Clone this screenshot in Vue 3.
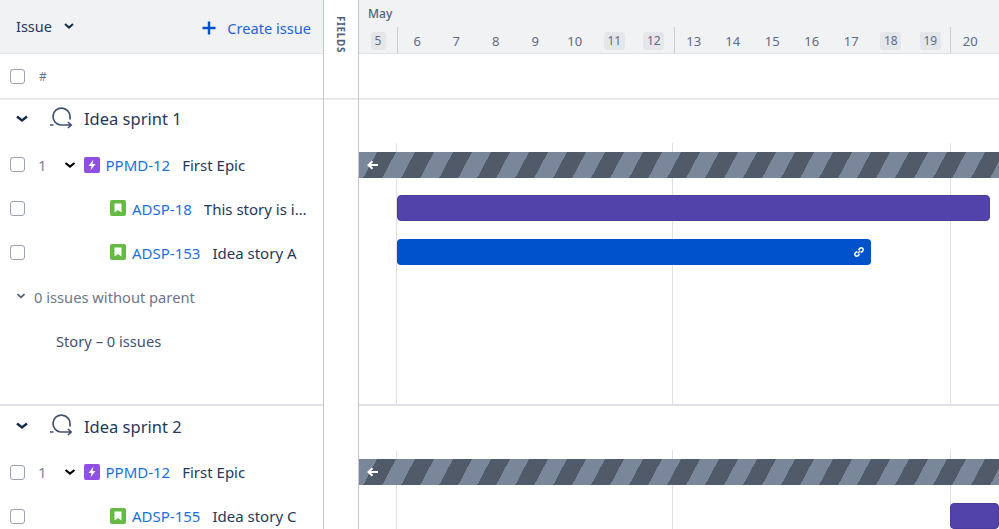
<script setup>
const days = [
  { n: 5, w: true, first: true },
  { n: 6, tick: true }, { n: 7 }, { n: 8 }, { n: 9 }, { n: 10 },
  { n: 11, w: true }, { n: 12, w: true },
  { n: 13, tick: true }, { n: 14 }, { n: 15 }, { n: 16 }, { n: 17 },
  { n: 18, w: true }, { n: 19, w: true },
  { n: 20, tick: true }
]
const gridLines = [37, 313, 591]
</script>

<template>
  <div class="board">
    <section class="list">
      <header class="list-head">
        <span class="issue-label">Issue</span>
        <svg class="head-chev" width="12" height="12" viewBox="0 0 12 12"><path d="M2 4l4 3.6L10 4" /></svg>
        <span class="create">
          <svg width="16" height="16" viewBox="0 0 16 16"><path d="M8 1.500v13M1.500 8h13" /></svg>
          Create issue
        </span>
      </header>
      <div class="sub-head">
        <span class="check"></span>
        <span class="hash">#</span>
      </div>

      <div class="sprint first">
        <div class="sprint-head">
          <svg class="sprint-chev" width="14" height="14" viewBox="0 0 14 14"><path d="M2 4.500l5 4 5-4" /></svg>
          <svg class="sprint-icon" width="24" height="24" viewBox="0 0 24 24">
            <path d="M10.500 18A8.500 8.500 0 1 1 20 9.500V12.500M10.500 18H21M18 15l3.200 3-3.200 3M0 18h3.500" />
          </svg>
          <span class="sprint-name">Idea sprint 1</span>
        </div>
        <div class="row tight">
          <span class="check"></span><span class="num">1</span>
          <svg class="row-chev" width="12" height="12" viewBox="0 0 12 12"><path d="M1.500 4l4.500 3.600L10.500 4" /></svg>
          <span class="type epic"><svg width="16" height="16" viewBox="0 0 16 16"><path d="M9.500 2.500L4.500 9h3l-1 4.500 5-6.500h-3z" /></svg></span>
          <a class="key">PPMD-12</a><span class="title">First Epic</span>
        </div>
        <div class="row child">
          <span class="check"></span>
          <span class="type story"><svg width="16" height="16" viewBox="0 0 16 16"><path d="M4.500 3.500h7v9L8 10 4.500 12.500z" /></svg></span>
          <a class="key">ADSP-18</a><span class="title">This story is in the sprint</span>
        </div>
        <div class="row child">
          <span class="check"></span>
          <span class="type story"><svg width="16" height="16" viewBox="0 0 16 16"><path d="M4.500 3.500h7v9L8 10 4.500 12.500z" /></svg></span>
          <a class="key">ADSP-153</a><span class="title">Idea story A</span>
        </div>
        <div class="row no-parent">
          <svg class="np-chev" width="10" height="10" viewBox="0 0 10 10"><path d="M1.500 3.200L5 6.400l3.500-3.200" /></svg>
          <span>0 issues without parent</span>
        </div>
        <div class="row empty-group"><span>Story – 0 issues</span></div>
      </div>

      <div class="sprint">
        <div class="sprint-head">
          <svg class="sprint-chev" width="14" height="14" viewBox="0 0 14 14"><path d="M2 4.500l5 4 5-4" /></svg>
          <svg class="sprint-icon" width="24" height="24" viewBox="0 0 24 24">
            <path d="M10.500 18A8.500 8.500 0 1 1 20 9.500V12.500M10.500 18H21M18 15l3.200 3-3.200 3M0 18h3.500" />
          </svg>
          <span class="sprint-name">Idea sprint 2</span>
        </div>
        <div class="row">
          <span class="check"></span><span class="num">1</span>
          <svg class="row-chev" width="12" height="12" viewBox="0 0 12 12"><path d="M1.500 4l4.500 3.600L10.500 4" /></svg>
          <span class="type epic"><svg width="16" height="16" viewBox="0 0 16 16"><path d="M9.500 2.500L4.500 9h3l-1 4.500 5-6.500h-3z" /></svg></span>
          <a class="key">PPMD-12</a><span class="title">First Epic</span>
        </div>
        <div class="row child">
          <span class="check"></span>
          <span class="type story"><svg width="16" height="16" viewBox="0 0 16 16"><path d="M4.500 3.500h7v9L8 10 4.500 12.500z" /></svg></span>
          <a class="key">ADSP-155</a><span class="title">Idea story C</span>
        </div>
      </div>
    </section>

    <aside class="fields">
      <div class="fields-top"><span class="fields-label">FIELDS</span></div>
    </aside>

    <section class="timeline">
      <header class="time-head">
        <div class="month">May</div>
        <div class="days">
          <div v-for="d in days" :key="d.n" class="day" :class="{ tick: d.tick, first: d.first }">
            <span :class="{ weekend: d.w }">{{ d.n }}</span>
          </div>
        </div>
      </header>
      <div class="time-sub"></div>

      <div class="lane first">
        <div class="lane-head"></div>
        <div class="lane-body">
          <i v-for="x in gridLines" :key="x" class="grid-line" :style="{ left: x + 'px' }"></i>
          <div class="bar-row tight">
            <div class="stripes">
              <svg width="14" height="14" viewBox="0 0 14 14"><path d="M12 7H3M6.500 3.200L2.500 7l4 3.800" /></svg>
            </div>
          </div>
          <div class="bar-row"><div class="bar purple wide"></div></div>
          <div class="bar-row">
            <div class="bar blue">
              <svg width="14" height="14" viewBox="0 0 14 14">
                <path d="M5.800 8.200l2.400-2.400M5 6.300L3.400 7.900a1.900 1.900 0 0 0 2.700 2.700L7.700 9M6.300 5l1.600-1.600a1.900 1.900 0 0 1 2.700 2.700L9 7.700" />
              </svg>
            </div>
          </div>
        </div>
      </div>

      <div class="lane">
        <div class="lane-head"></div>
        <div class="lane-body">
          <i v-for="x in gridLines" :key="x" class="grid-line" :style="{ left: x + 'px' }"></i>
          <div class="bar-row">
            <div class="stripes">
              <svg width="14" height="14" viewBox="0 0 14 14"><path d="M12 7H3M6.500 3.200L2.500 7l4 3.800" /></svg>
            </div>
          </div>
          <div class="bar-row"><div class="bar purple late"></div></div>
        </div>
      </div>
    </section>
  </div>
</template>

<style>
html, body { margin: 0; background: #fff; }
</style>

<style scoped>
.board {
  display: flex;
  width: 999px;
  height: 529px;
  overflow: hidden;
  background: #fff;
  color: #172b4d;
  font-family: "Noto Sans", "Open Sans", sans-serif;
  font-size: 15px;
}
.list {
  width: 324px;
  flex: none;
  box-sizing: border-box;
  border-right: 1px solid #c1c7d0;
}
.fields {
  width: 35px;
  flex: none;
  box-sizing: border-box;
  border-right: 1px solid #c1c7d0;
}
.fields-top {
  height: 98px;
  box-sizing: border-box;
  box-shadow: 0 1px 0 #e1e3e8, 0 2px 0 #eeeff2;
  display: flex;
  justify-content: center;
  padding-top: 16px;
}
.fields-label {
  writing-mode: vertical-rl;
  font-size: 10px;
  font-weight: 700;
  letter-spacing: 0.6px;
  line-height: 12px;
  height: 40px;
  color: #505f79;
}
.list-head {
  height: 54px;
  box-sizing: border-box;
  background: #f1f2f4;
  border-bottom: 1px solid #dfe1e6;
  display: flex;
  align-items: center;
  padding: 0 12px 0 16px;
}
.issue-label {
  margin-top: -2px;
  font-size: 14.500px;
  color: #253858;
}
.head-chev {
  margin: -2px 0 0 11px;
  fill: none;
  stroke: #172b4d;
  stroke-width: 2;
}
.create {
  margin-left: auto;
  padding-top: 3px;
  display: flex;
  align-items: center;
  gap: 10px;
  font-size: 14.600px;
  color: #1c62d8;
}
.create svg {
  margin-top: -1px;
  fill: none;
  stroke: #0052cc;
  stroke-width: 2.400;
}
.sub-head {
  height: 44px;
  box-sizing: border-box;
  box-shadow: 0 1px 0 #e1e3e8, 0 2px 0 #eeeff2;
  display: flex;
  align-items: center;
  padding: 1px 0 0 10px;
}
.hash {
  margin-left: 14px;
  font-size: 12px;
  color: #6b778c;
}
.check {
  width: 15px;
  height: 15px;
  flex: none;
  border: 1.500px solid #9aa3b2;
  border-radius: 3px;
  box-sizing: border-box;
  background: #fff;
}
.sprint.first { height: 306px; }
.sprint:not(.first) { border-top: 2px solid #dfe1e6; }
.sprint-head {
  height: 45px;
  box-sizing: border-box;
  padding: 0 0 4px 15px;
  display: flex;
  align-items: center;
}
.sprint:not(.first) .sprint-head { height: 44px; padding-bottom: 4px; }
.sprint-chev {
  fill: none;
  stroke: #172b4d;
  stroke-width: 2.400;
}
.sprint-icon {
  margin-left: 21px;
  fill: none;
  stroke: #42526e;
  stroke-width: 1.700;
}
.sprint-name {
  margin-left: 10px;
  font-size: 16.500px;
  color: #253858;
}
.row {
  height: 44px;
  display: flex;
  align-items: center;
  padding-left: 10px;
  box-sizing: border-box;
}
.row.tight { height: 43px; }
.num {
  margin-left: 13px;
  width: 8px;
  color: #7a869a;
}
.row-chev {
  margin-left: 18px;
  fill: none;
  stroke: #000;
  stroke-width: 2;
}
.type {
  width: 16px;
  height: 16px;
  flex: none;
  border-radius: 2px;
  display: flex;
}
.epic { background: #904ee2; margin-left: 8px; }
.story { background: #65ba43; margin-left: 85px; }
.type svg { fill: #fff; }
.key {
  margin-left: 6px;
  color: #1c6fe0;
  white-space: nowrap;
}
.epic + .key { margin-left: 5.500px; }
.title {
  margin-left: 12px;
  padding-right: 15px;
  color: #253858;
  flex: 1;
  min-width: 0;
  overflow: hidden;
  text-overflow: ellipsis;
  white-space: nowrap;
}
.first .child .key,
.first .child .title,
.first .no-parent span,
.first .empty-group span {
  padding-top: 1px;
}
.no-parent {
  padding-left: 16px;
  font-size: 14.700px;
  color: #6b778c;
  gap: 8px;
}
.np-chev {
  fill: none;
  stroke: #505f79;
  stroke-width: 1.800;
}
.empty-group {
  padding-left: 56px;
  font-size: 14.700px;
  color: #42526e;
}
.timeline {
  flex: 1;
  min-width: 0;
  overflow: hidden;
}
.time-head {
  height: 54px;
  box-sizing: border-box;
  background: #f1f2f4;
  border-bottom: 1px solid #dfe1e6;
}
.month {
  height: 27px;
  padding: 5px 0 0 9px;
  box-sizing: border-box;
  font-size: 12px;
  font-weight: 500;
  line-height: 18px;
  color: #505f79;
}
.days {
  display: flex;
  height: 26px;
}
.day {
  width: 39.500px;
  flex: none;
  box-sizing: border-box;
  padding-top: 1px;
  display: flex;
  align-items: center;
  justify-content: center;
  font-size: 13px;
  color: #5e6c84;
}
.day.first { width: 38px; }
.day.tick { border-left: 1px solid #c9ced6; }
.weekend {
  display: block;
  min-width: 21px;
  height: 18px;
  line-height: 18px;
  box-sizing: border-box;
  text-align: center;
  background: #e4e6ea;
  border-radius: 3px;
  font-size: 12px;
}
.day.first .weekend { min-width: 15px; }
.time-sub {
  height: 44px;
  box-sizing: border-box;
  box-shadow: 0 1px 0 #e1e3e8, 0 2px 0 #eeeff2;
}
.lane.first { height: 306px; }
.lane:not(.first) { border-top: 2px solid #dfe1e6; }
.lane-head { height: 45px; }
.lane:not(.first) .lane-head { height: 44px; }
.lane-body {
  position: relative;
  height: 261px;
}
.grid-line {
  position: absolute;
  top: 0;
  bottom: 0;
  width: 1px;
  background: #dfe1e6;
}
.bar-row {
  height: 44px;
  display: flex;
  align-items: center;
  position: relative;
}
.bar-row.tight { height: 43px; padding-top: 1px; box-sizing: border-box; }
.stripes {
  width: 100%;
  height: 26px;
  display: flex;
  align-items: center;
  padding-left: 7px;
  box-sizing: border-box;
  background: repeating-linear-gradient(118deg, #7a869a 0 15.900px, #505a69 15.900px 32.670px, #7a869a 32.670px 33.550px);
}
.stripes svg {
  fill: none;
  stroke: #fff;
  stroke-width: 2;
}
.bar {
  height: 26px;
  box-sizing: border-box;
  border-radius: 4px;
}
.purple {
  background: #5243aa;
  border: 1px solid #4a3c9c;
}
.wide {
  margin-left: 38px;
  width: 593px;
}
.late {
  margin-left: 591px;
  width: 80px;
}
.blue {
  margin-left: 38px;
  width: 474px;
  background: #0052cc;
  display: flex;
  align-items: center;
  justify-content: flex-end;
  padding-right: 5px;
}
.blue svg {
  fill: none;
  stroke: #fff;
  stroke-width: 1.500;
}
</style>
